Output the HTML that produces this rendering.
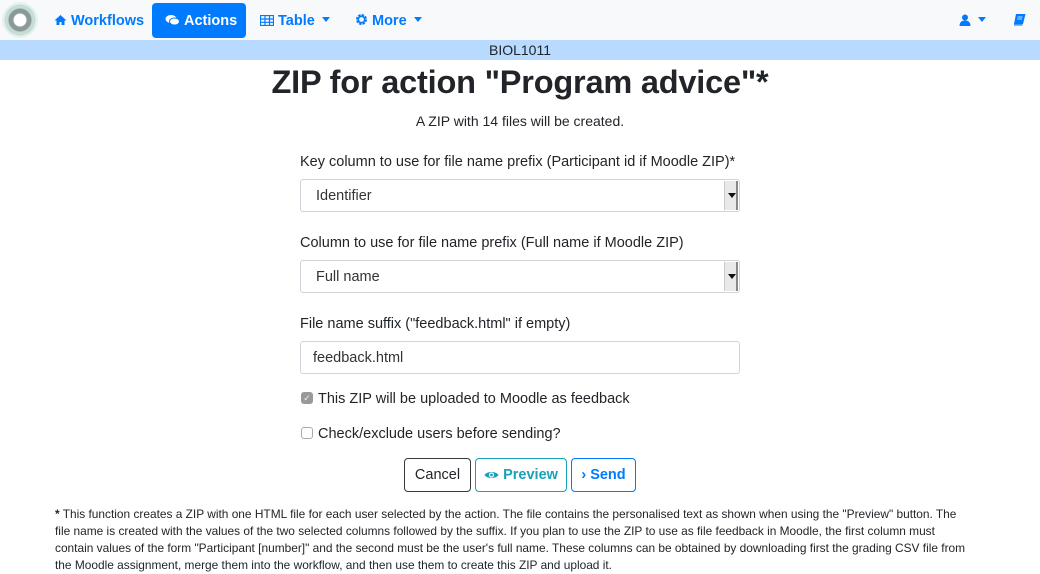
<!DOCTYPE html>
<html><head><style>
*{box-sizing:border-box;margin:0;padding:0}
body{width:1040px;height:572px;overflow:hidden;background:#fff;font-family:"Liberation Sans",sans-serif;color:#212529;position:relative}
.nav{position:absolute;left:0;top:0;width:1040px;height:40px;background:#f8f9fa}
.ni{position:absolute;top:3px;height:35px;line-height:36px;font-size:14.5px;font-weight:bold;color:#007bff;padding:0 13px;white-space:nowrap}
.ni svg{vertical-align:-1px;margin-right:4px}
.act{background:#007bff;color:#fff;border-radius:4px}
.car{display:inline-block;width:0;height:0;border-left:4px solid transparent;border-right:4px solid transparent;border-top:5px solid currentColor;vertical-align:3px;margin-left:7px}
.band{position:absolute;top:40px;left:0;width:1040px;height:20px;background:#b8daff;text-align:center;font-size:14px;line-height:21px;color:#212529}
h1{position:absolute;top:64px;width:1040px;text-align:center;font-size:32.5px;font-weight:bold;color:#212529;letter-spacing:-0.2px}
.t{position:absolute;font-size:14.5px;color:#212529}
.sel{position:absolute;left:300px;width:440px;height:33px;border:1px solid #ced4da;border-radius:3px;font-size:14.5px;line-height:33px;padding-left:15px;color:#333}
.sel .a{position:absolute;right:1px;top:1px;width:14px;height:29px;background:#e9e9e9;border-left:1px solid #ccc;border-right:2px solid #888}
.sel .a:after{content:"";position:absolute;left:3px;top:12px;border-left:4px solid transparent;border-right:4px solid transparent;border-top:5px solid #111}
.cb{position:absolute;left:301px;width:12px;height:12px;border:1px solid #aaa;border-radius:3px;background:#fff}
.btn{position:absolute;top:458px;height:34px;border-radius:4px;font-size:14.5px;line-height:33px;text-align:center;background:#fff;white-space:nowrap}
.foot{position:absolute;left:55px;top:506px;width:912px;font-size:11.9px;line-height:17px;color:#212529}
</style></head><body>
<div class="nav">
 <div style="position:absolute;left:2px;top:2px;width:36px;height:36px;border-radius:50%;background:radial-gradient(circle,#fff 0 6px,#8a9a98 7px 11px,#c8dcd6 12px 15px,#e6f2ee 16px)"></div>
 <div class="ni" style="left:41px"><svg width="13" height="12" viewBox="0 0 13 12"><path d="M6.5 1L0.5 6.5h2V11h3V8h2v3h3V6.5h2z" fill="#007bff"/></svg>Workflows</div>
 <div class="ni act" style="left:152px;width:94px;padding:0 13px"><svg width="15" height="12" viewBox="0 0 15 12"><ellipse cx="6" cy="5" rx="5.5" ry="4" fill="#fff"/><ellipse cx="9.5" cy="7.5" rx="5" ry="3.5" fill="#fff" stroke="#007bff" stroke-width="1"/></svg>Actions</div>
 <div class="ni" style="left:247px"><svg width="14" height="11" viewBox="0 0 14 11"><path d="M.5.5h13v10H.5zM.5 4h13M.5 7.3h13M5 .5v10M9.5.5v10" fill="none" stroke="#007bff" stroke-width="1.2"/></svg>Table<span class="car"></span></div>
 <div class="ni" style="left:342px"><svg width="13" height="13" viewBox="0 0 13 13"><circle cx="6.5" cy="6.5" r="4.2" fill="none" stroke="#007bff" stroke-width="2.6" stroke-dasharray="2.2 1.1"/><circle cx="6.5" cy="6.5" r="3.2" fill="none" stroke="#007bff" stroke-width="1.6"/></svg>More<span class="car"></span></div>
 <div class="ni" style="left:946px"><svg width="12" height="12" viewBox="0 0 12 12"><circle cx="6" cy="3.5" r="3" fill="#007bff"/><path d="M0.5 12c0-4 2.5-5.5 5.5-5.5s5.5 1.5 5.5 5.5z" fill="#007bff"/></svg><span class="car" style="margin-left:3px"></span></div>
 <div class="ni" style="left:1000px"><svg width="13" height="13" viewBox="0 0 13 13"><path d="M3 1h9.5l-2.5 10H1z" fill="#007bff"/><path d="M1 11.2h8.6l-0.3 1.3H1z" fill="#007bff"/><path d="M4.5 4h5M4 6h5" stroke="#fff" stroke-width="0.8"/></svg></div>
</div>
<div class="band">BIOL1011</div>
<h1>ZIP for action "Program advice"*</h1>
<div class="t" style="top:113px;width:1040px;text-align:center;font-size:14px">A ZIP with 14 files will be created.</div>
<div class="t" style="left:300px;top:154px">Key column to use for file name prefix (Participant id if Moodle ZIP)*</div>
<div class="sel" style="top:179px">Identifier<span class="a"></span></div>
<div class="t" style="left:300px;top:235px">Column to use for file name prefix (Full name if Moodle ZIP)</div>
<div class="sel" style="top:260px">Full name<span class="a"></span></div>
<div class="t" style="left:300px;top:316px">File name suffix ("feedback.html" if empty)</div>
<div class="sel" style="top:341px;padding-left:12px;line-height:33px">feedback.html</div>
<div class="cb" style="top:392px;background:#999;border-color:#999;color:#eee;font-size:9px;line-height:10px;text-align:center">✓</div>
<div class="t" style="left:318px;top:391px">This ZIP will be uploaded to Moodle as feedback</div>
<div class="cb" style="top:427px"></div>
<div class="t" style="left:318px;top:426px">Check/exclude users before sending?</div>
<div class="btn" style="left:404px;width:67px;border:1px solid #343a40;color:#212529">Cancel</div>
<div class="btn" style="left:475px;width:92px;border:1px solid #17a2b8;color:#17a2b8;font-weight:bold"><svg width="15" height="10" viewBox="0 0 15 10" style="vertical-align:-1px"><path d="M.5 5C3 1 12 1 14.5 5 12 9 3 9 .5 5z" fill="#17a2b8"/><circle cx="7.5" cy="5" r="2.6" fill="#fff"/><circle cx="7.5" cy="5" r="1.4" fill="#17a2b8"/></svg> Preview</div>
<div class="btn" style="left:571px;width:65px;border:1px solid #007bff;color:#007bff;font-weight:bold">› Send</div>
<div class="foot"><b>*</b> This function creates a ZIP with one HTML file for each user selected by the action. The file contains the personalised text as shown when using the "Preview" button. The file name is created with the values of the two selected columns followed by the suffix. If you plan to use the ZIP to use as file feedback in Moodle, the first column must contain values of the form "Participant [number]" and the second must be the user's full name. These columns can be obtained by downloading first the grading CSV file from the Moodle assignment, merge them into the workflow, and then use them to create this ZIP and upload it.</div>
</body></html>
